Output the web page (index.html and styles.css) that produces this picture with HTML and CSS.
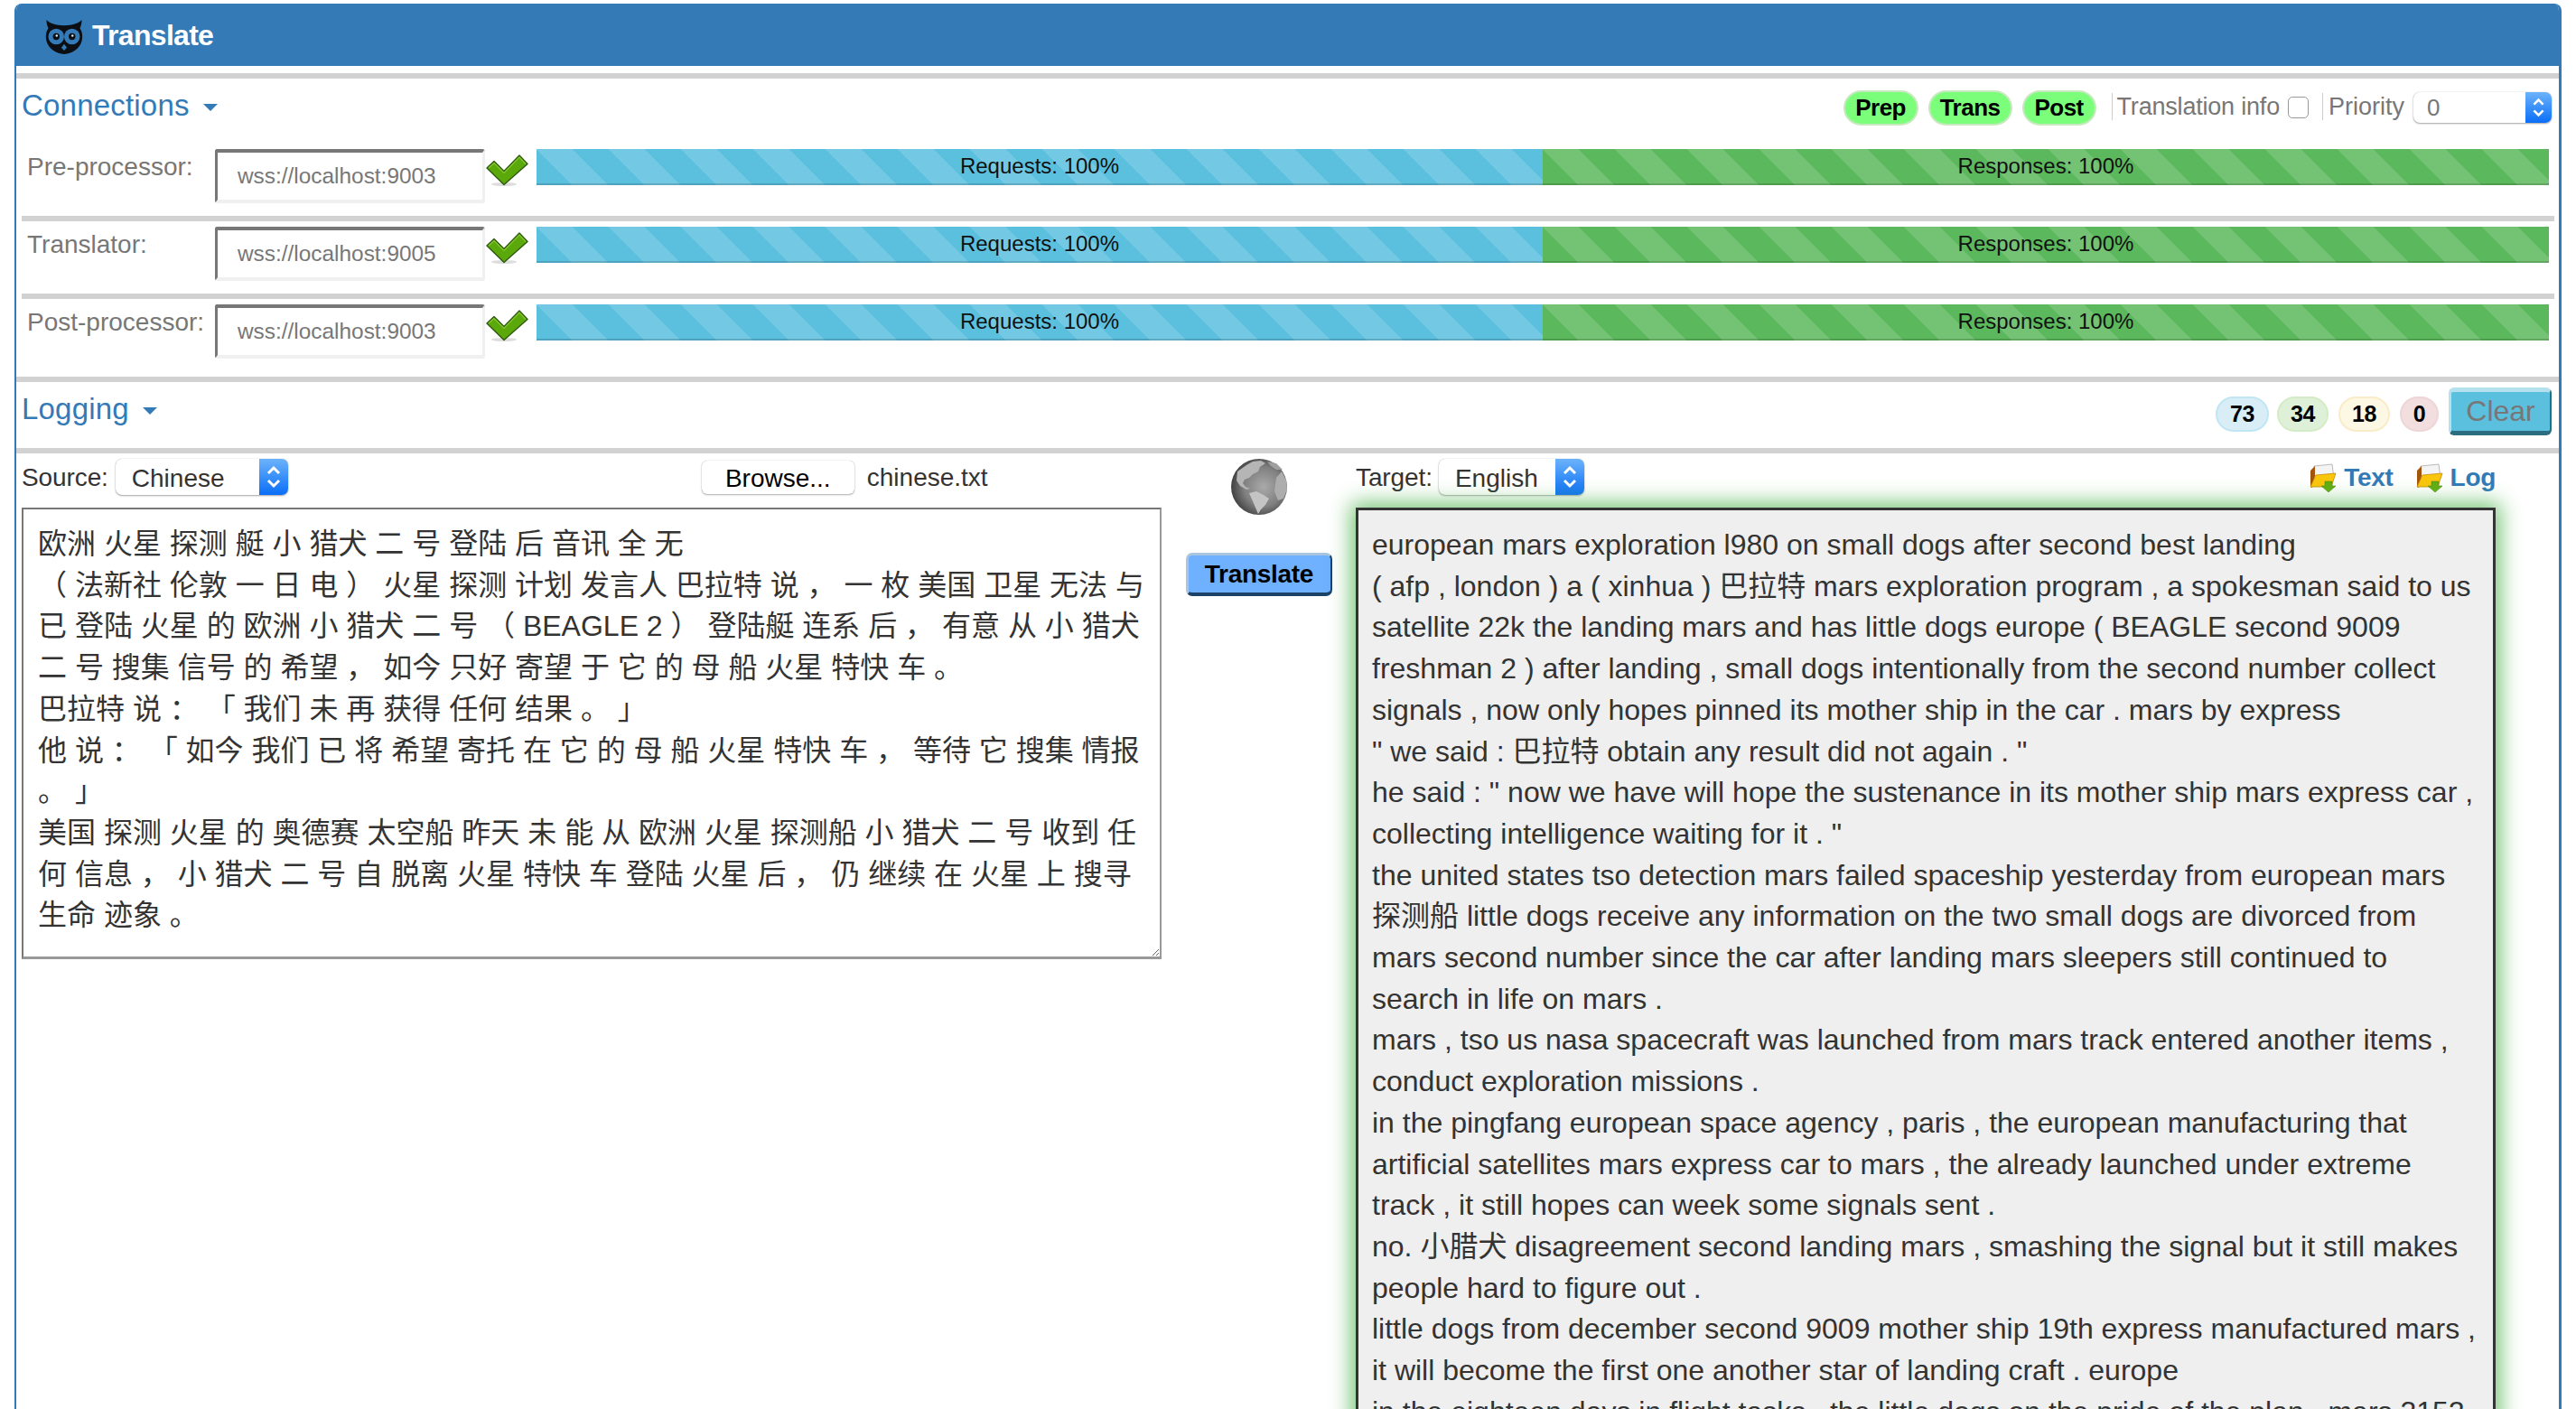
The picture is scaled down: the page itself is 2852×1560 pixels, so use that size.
FILE: index.html
```html
<!DOCTYPE html>
<html lang="en">
<head>
<meta charset="utf-8">
<title>Translate</title>
<link rel="stylesheet" href="styles.css">
</head>
<body>
<svg class="defs" aria-hidden="true">
  <symbol id="check" viewBox="0 0 47 36">
    <ellipse cx="20" cy="33" rx="14" ry="2" fill="#ddd"/>
    <path d="M1 15 L9 7.500 L20 18.500 L37 1 L46 10.500 L20 33.500 Z" fill="#5ba80a" stroke="#2f5a10" stroke-width="1.400" stroke-linejoin="round"/>
    <path d="M3 15 L9 9.500 L20 20.500 L37 3 L44 10.500" fill="none" stroke="#86c832" stroke-width="1.200"/>
  </symbol>
  <symbol id="folder" viewBox="0 0 30 32">
    <path d="M5 3 L25 1 L27 16 L6 20 Z" fill="#f4f4f4" stroke="#aaa" stroke-width=".8"/>
    <path d="M1 8 L6 3 L6 14 L3 27 L1 26 Z" fill="#a4540c"/>
    <path d="M1 26 L7 13 L29 11 L24 26 Z" fill="#fbc60c" stroke="#c88b05" stroke-width=".8"/>
    <path d="M17 20 H25 V25 H29 L21 32 L13 25 H17 Z" fill="#63ad12" stroke="#4d8d0c" stroke-width=".6"/>
  </symbol>
  <symbol id="updown" viewBox="0 0 32 40">
    <path d="M10 16 L16 10 L22 16 M10 24 L16 30 L22 24" fill="none" stroke="#fff" stroke-width="3"/>
  </symbol>
</svg>
<div class="panel">
  <header class="panel-head">
    <svg class="owl" viewBox="0 0 40 37" aria-hidden="true">
      <path d="M1 0 C5 4 11 6 20 6 C29 6 35 4 39 0 C39 4 38 7 37 9 C40 13 40 19 39 23 C37 31 28 37 20 37 C12 37 3 31 1 23 C0 19 0 13 3 9 C2 7 1 4 1 0 Z" fill="#0b0e12"/>
      <circle cx="11.500" cy="18" r="8.500" fill="#337ab7"/>
      <circle cx="28.500" cy="18" r="8.500" fill="#337ab7"/>
      <circle cx="11.500" cy="18" r="3.600" fill="#0b0e12"/>
      <circle cx="28.500" cy="18" r="3.600" fill="#0b0e12"/>
      <circle cx="12" cy="17" r="1.200" fill="#dfe9f2"/>
      <circle cx="29" cy="17" r="1.200" fill="#dfe9f2"/>
      <path d="M20 26 L23 30 L20 33 L17 30 Z" fill="#337ab7"/>
    </svg>
    <span class="brand">Translate</span>
  </header>
  <div class="sep sep-first"></div>

  <div class="toolbar toolbar-conn">
    <a class="section-title">Connections<span class="caret"></span></a>
    <div class="tools">
      <span class="pill pill-prep">Prep</span>
      <span class="pill pill-trans">Trans</span>
      <span class="pill pill-post">Post</span>
      <span class="vline"></span>
      <span class="muted info-label">Translation info</span>
      <span class="checkbox"></span>
      <span class="vline vline-2"></span>
      <span class="muted priority-label">Priority</span>
      <span class="select select-priority"><span class="select-value">0</span><span class="select-arrow"><svg class="updown"><use href="#updown"/></svg></span></span>
    </div>
  </div>

  <div class="conn-row">
    <label class="conn-label">Pre-processor:</label>
    <div class="ws-input">wss://localhost:9003</div>
    <svg class="check"><use href="#check"/></svg>
    <div class="progress"><div class="bar bar-req">Requests: 100%</div><div class="bar bar-res">Responses: 100%</div></div>
  </div>
  <div class="sep sep-inner"></div>
  <div class="conn-row">
    <label class="conn-label">Translator:</label>
    <div class="ws-input">wss://localhost:9005</div>
    <svg class="check"><use href="#check"/></svg>
    <div class="progress"><div class="bar bar-req">Requests: 100%</div><div class="bar bar-res">Responses: 100%</div></div>
  </div>
  <div class="sep sep-inner"></div>
  <div class="conn-row conn-row-last">
    <label class="conn-label">Post-processor:</label>
    <div class="ws-input">wss://localhost:9003</div>
    <svg class="check"><use href="#check"/></svg>
    <div class="progress"><div class="bar bar-req">Requests: 100%</div><div class="bar bar-res">Responses: 100%</div></div>
  </div>
  <div class="sep"></div>

  <div class="toolbar toolbar-log">
    <a class="section-title">Logging<span class="caret"></span></a>
    <div class="tools">
      <span class="badge badge-info">73</span>
      <span class="badge badge-ok">34</span>
      <span class="badge badge-warn">18</span>
      <span class="badge badge-err">0</span>
      <span class="btn-clear">Clear</span>
    </div>
  </div>
  <div class="sep"></div>

  <main class="workspace">
    <section class="col col-source">
      <div class="col-bar">
        <span class="field-label">Source:</span>
        <span class="select select-source"><span class="select-value">Chinese</span><span class="select-arrow"><svg class="updown"><use href="#updown"/></svg></span></span>
        <div class="file-pick">
          <span class="btn-browse">Browse...</span>
          <span class="file-name">chinese.txt</span>
        </div>
      </div>
      <textarea class="source-text" readonly wrap="off">欧洲 火星 探测 艇 小 猎犬 二 号 登陆 后 音讯 全 无
（ 法新社 伦敦 一 日 电 ） 火星 探测 计划 发言人 巴拉特 说 ， 一 枚 美国 卫星 无法 与
已 登陆 火星 的 欧洲 小 猎犬 二 号 （ BEAGLE 2 ） 登陆艇 连系 后 ， 有意 从 小 猎犬
二 号 搜集 信号 的 希望 ， 如今 只好 寄望 于 它 的 母 船 火星 特快 车 。
巴拉特 说 ： 「 我们 未 再 获得 任何 结果 。 」
他 说 ： 「 如今 我们 已 将 希望 寄托 在 它 的 母 船 火星 特快 车 ， 等待 它 搜集 情报
。 」
美国 探测 火星 的 奥德赛 太空船 昨天 未 能 从 欧洲 火星 探测船 小 猎犬 二 号 收到 任
何 信息 ， 小 猎犬 二 号 自 脱离 火星 特快 车 登陆 火星 后 ， 仍 继续 在 火星 上 搜寻
生命 迹象 。</textarea>
    </section>

    <section class="col-mid">
      <svg class="globe" viewBox="0 0 62 62" aria-hidden="true">
        <defs>
          <radialGradient id="sphere" cx="58%" cy="50%" r="58%">
            <stop offset="0" stop-color="#aaa"/>
            <stop offset=".6" stop-color="#808080"/>
            <stop offset="1" stop-color="#404040"/>
          </radialGradient>
        </defs>
        <circle cx="31" cy="31" r="31" fill="url(#sphere)"/>
        <path d="M7 14 L17 7 L24 3 L33 2 L38 5 L32 9 L30 14 L24 17 L20 21 L15 23 L13 27 L16 31 L21 33 L17 34 L10 30 L6 24 Z" fill="#b5b5b5"/>
        <path d="M20 38 L28 36 L36 40 L42 44 L38 51 L33 56 L30 61 L27 54 L24 47 Z" fill="#c4c4c4"/>
        <path d="M50 21 L56 14 L61 24 L62 34 L58 44 L52 46 L48 36 Z" fill="#adadad"/>
        <path d="M40 3 L50 5 L57 12 L50 12 L44 8 Z" fill="#a0a0a0"/>
      </svg>
      <span class="btn-translate">Translate</span>
    </section>

    <section class="col col-target">
      <div class="col-bar">
        <span class="field-label target-label">Target:</span>
        <span class="select select-target"><span class="select-value">English</span><span class="select-arrow"><svg class="updown"><use href="#updown"/></svg></span></span>
        <div class="downloads">
          <a class="dl"><svg class="folder"><use href="#folder"/></svg>Text</a>
          <a class="dl"><svg class="folder"><use href="#folder"/></svg>Log</a>
        </div>
      </div>
      <div class="target-text">european mars exploration l980 on small dogs after second best landing<br>
( afp , london ) a ( xinhua ) 巴拉特 mars exploration program , a spokesman said to us<br>
satellite 22k the landing mars and has little dogs europe ( BEAGLE second 9009<br>
freshman 2 ) after landing , small dogs intentionally from the second number collect<br>
signals , now only hopes pinned its mother ship in the car . mars by express<br>
" we said : 巴拉特 obtain any result did not again . "<br>
he said : " now we have will hope the sustenance in its mother ship mars express car ,<br>
collecting intelligence waiting for it . "<br>
the united states tso detection mars failed spaceship yesterday from european mars<br>
探测船 little dogs receive any information on the two small dogs are divorced from<br>
mars second number since the car after landing mars sleepers still continued to<br>
search in life on mars .<br>
mars , tso us nasa spacecraft was launched from mars track entered another items ,<br>
conduct exploration missions .<br>
in the pingfang european space agency , paris , the european manufacturing that<br>
artificial satellites mars express car to mars , the already launched under extreme<br>
track , it still hopes can week some signals sent .<br>
no. 小腊犬 disagreement second landing mars , smashing the signal but it still makes<br>
people hard to figure out .<br>
little dogs from december second 9009 mother ship 19th express manufactured mars ,<br>
it will become the first one another star of landing craft . europe<br>
in the eighteen days in flight tasks , the little dogs on the pride of the plan , mars 3152</div>
    </section>
  </main>
</div>
</body>
</html>
```

FILE: styles.css
```css
* { box-sizing: border-box; }
html, body { height: 100%; }
body {
  margin: 0;
  height: 1560px;
  overflow: hidden;
  background: #fff;
  color: #333;
  font-family: "Liberation Sans", "Noto Sans CJK SC", sans-serif;
  font-size: 28px;
}
.defs { width: 0; height: 0; display: block; }

.panel {
  width: 2820px;
  height: 1556px;
  margin: 4px 0 0 16px;
  border-left: 2px solid #337ab7;
  border-right: 3px solid #337ab7;
  border-radius: 8px 8px 0 0;
  overflow: hidden;
}
.panel-head {
  height: 69px;
  background: #337ab7;
  display: flex;
  align-items: center;
  padding-left: 32px;
  margin-bottom: 8px;
}
.owl { width: 42px; height: 38px; margin-top: 4px; }
.brand {
  margin-left: 10px;
  margin-top: 2px;
  color: #fff;
  font-size: 32px;
  font-weight: 700;
  letter-spacing: -0.7px;
}

.sep { height: 6px; background: #d2d2d2; }
.sep-inner { margin: 0 5px 6px 6px; }

.toolbar { display: flex; justify-content: space-between; padding: 0 8px 0 6px; }
.toolbar-conn { height: 78px; }
.toolbar-log { height: 73px; }
.section-title {
  align-self: flex-start;
  color: #337ab7;
  font-size: 33px;
  line-height: 37px;
  margin-top: 11px;
  display: flex;
  align-items: center;
  letter-spacing: .2px;
}
.caret {
  margin-left: 15px;
  margin-top: 4px;
  border-top: 8px solid #337ab7;
  border-left: 8px solid transparent;
  border-right: 8px solid transparent;
}
.tools { display: flex; align-items: flex-start; }
.toolbar-conn .tools { padding-top: 13px; }
.toolbar-log .tools { padding-top: 6px; }

.pill {
  height: 39px;
  border-radius: 20px;
  background: #7bff7b;
  border: 2px solid #c8e8c0;
  color: #000;
  font-size: 26px;
  font-weight: 700;
  line-height: 35px;
  text-align: center;
  letter-spacing: -0.5px;
}
.pill-prep { width: 83px; }
.pill-trans { width: 93px; margin-left: 11px; }
.pill-post { width: 82px; margin-left: 11px; }
.vline { width: 1px; height: 30px; margin: 3px 0 0 17px; background: #ccc; }
.vline-2 { margin-left: 15px; }
.muted { color: #777; font-size: 27px; line-height: 30px; margin-top: 3px; letter-spacing: -0.2px; }
.info-label { margin-left: 5px; }
.priority-label { margin-left: 6px; letter-spacing: 0; }
.checkbox {
  width: 23px;
  height: 24px;
  margin: 7px 0 0 9px;
  border: 1px solid #999;
  border-radius: 5px;
  background: #fff;
}

.select {
  display: flex;
  height: 40px;
  border-radius: 7px;
  background: #fff;
  box-shadow: 0 1px 2px rgba(0,0,0,.35), 0 0 1px rgba(0,0,0,.3);
  overflow: hidden;
}
.select-value { flex: 1; padding: 2px 0 0 18px; line-height: 40px; font-size: 28px; color: #333; }
.select-arrow {
  width: 32px;
  background: linear-gradient(#6cb3fb, #0a6ef7);
  display: flex;
  align-items: center;
}
.updown { width: 32px; height: 40px; }
.select-priority { width: 153px; height: 34px; margin: 2px 0 0 10px; }
.select-priority .select-value { padding: 0 0 0 15px; line-height: 34px; color: #777; font-size: 26px; }
.select-priority .select-arrow { width: 29px; }
.select-priority .updown { width: 29px; height: 34px; }

.conn-row { display: flex; height: 74px; padding-left: 6px; }
.conn-row-last { height: 80px; }
.conn-label {
  width: 214px;
  padding: 2px 0 0 6px;
  color: #777;
  font-size: 28px;
  line-height: 36px;
  white-space: nowrap;
}
.ws-input {
  width: 299px;
  height: 60px;
  padding: 10px 0 0 22px;
  border-style: solid;
  border-color: #777 #f0f0f0 #f0f0f0 #777;
  border-width: 4px 3px 4px 3px;
  border-radius: 3px;
  color: #777;
  font-size: 24.4px;
  line-height: 32px;
  background: #fff;
}
.check { width: 47px; height: 36px; margin: 6px 9px 0 1px; }
.progress { display: flex; width: 2228px; height: 40px; }
.bar {
  color: #111;
  font-size: 24px;
  line-height: 38px;
  text-align: center;
  background-size: 80px 80px;
  box-shadow: inset 0 -2px 0 rgba(0,0,0,.15);
  background-image: linear-gradient(45deg, rgba(255,255,255,.15) 25%, transparent 25%, transparent 50%, rgba(255,255,255,.15) 50%, rgba(255,255,255,.15) 75%, transparent 75%, transparent);
}
.bar-req { width: 1114px; background-color: #5bc0de; }
.bar-res { width: 1114px; background-color: #5cb85c; }

.badge {
  width: 59px;
  height: 39px;
  margin: 10px 0 0 9px;
  border-radius: 20px;
  border: 2px solid;
  color: #000;
  font-size: 25px;
  font-weight: 700;
  line-height: 35px;
  text-align: center;
  letter-spacing: -0.5px;
}
.badge-info { background: #d9edf7; border-color: #c0e6f4; margin-left: 0; }
.badge-ok { background: #dff0d8; border-color: #d4ecc6; width: 57px; }
.badge-warn { background: #fcf8e3; border-color: #faecc8; width: 57px; margin-left: 11px; }
.badge-err { background: #f2dede; border-color: #eed5d8; width: 43px; margin-left: 11px; }
.btn-clear {
  width: 114px;
  height: 53px;
  margin-left: 11px;
  border-radius: 6px;
  background: #5bc0de;
  border-style: solid;
  border-width: 5px 2px 5px 3px;
  border-color: #b5e1ef #2b6c7f #2b6c7f #b5e1ef;
  color: #777;
  font-size: 32px;
  line-height: 43px;
  text-align: center;
}

.workspace { display: flex; padding: 6px 0 0 6px; }
.col { width: 1262px; display: flex; flex-direction: column; }
.col-source { width: 1262px; }
.col-mid { width: 215px; display: flex; flex-direction: column; align-items: center; }
.col-bar { height: 40px; margin-bottom: 14px; display: flex; align-items: center; }
.field-label { margin-top: 2px; font-size: 28px; letter-spacing: -0.1px; color: #333; }
.select-source { width: 191px; margin-left: 8px; }
.select-target { width: 161px; margin-left: 7px; }
.file-pick { display: flex; align-items: center; margin-left: 458px; }
.btn-browse {
  width: 169px;
  height: 37px;
  border-radius: 6px;
  background: #fff;
  box-shadow: 0 1px 2px rgba(0,0,0,.3), 0 0 1px rgba(0,0,0,.3);
  color: #000;
  font-size: 28px;
  line-height: 39px;
  text-align: center;
}
.file-name { margin: 2px 0 0 14px; font-size: 28px; color: #333; }
.source-text {
  display: block;
  width: 1262px;
  height: 500px;
  margin: 0;
  padding: 16px 16px;
  border-style: solid;
  border-color: #777 #999 #999 #777;
  border-width: 2px 2px 3px 2px;
  border-radius: 0;
  background: #fff;
  color: #333;
  font-family: "Liberation Sans", "Noto Sans CJK SC", sans-serif;
  font-size: 32px;
  line-height: 45.7px;
  white-space: pre;
  overflow: hidden;
  resize: both;
  outline: none;
}
.globe { width: 62px; height: 62px; }
.btn-translate {
  width: 162px;
  height: 48px;
  margin-top: 42px;
  border-radius: 7px;
  border-style: solid;
  border-width: 3px 2px 4px 3px;
  border-color: #a9c5e0 #1c4268 #1c4268 #a9c5e0;
  background: #6fb0ff;
  color: #000;
  font-size: 28px;
  font-weight: 700;
  line-height: 41px;
  text-align: center;
  letter-spacing: -0.3px;
}
.downloads { margin: 2px 0 0 auto; display: flex; align-items: center; }
.dl {
  display: flex;
  align-items: center;
  color: #337ab7;
  font-size: 28px;
  font-weight: 700;
  letter-spacing: -0.3px;
  margin-left: 25px;
}
.folder { width: 30px; height: 32px; margin-right: 8px; }
.target-text {
  width: 1262px;
  height: 1100px;
  padding: 16px 15px;
  border: 3px solid #333;
  background: #efefef;
  color: #333;
  font-size: 32px;
  line-height: 45.7px;
  white-space: nowrap;
  box-shadow: 0 0 22px 5px rgba(92,184,92,.85);
}
```
